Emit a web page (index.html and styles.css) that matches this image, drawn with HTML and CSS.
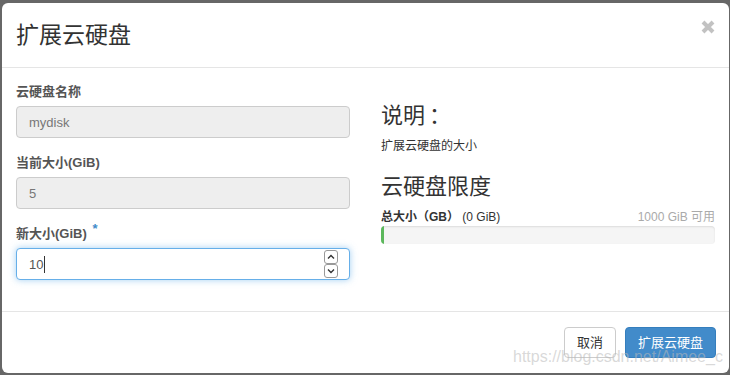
FILE: index.html
```html
<!DOCTYPE html>
<html lang="zh">
<head>
<meta charset="utf-8">
<link rel="stylesheet" href="styles.css">
</head>
<body>
<div class="modal">
  <div class="modal-header">
    <h4 class="modal-title">扩展云硬盘</h4>
    <span class="close" aria-label="关闭">
      <svg width="14" height="14" viewBox="0 0 14 14"><path d="M2 2L12 12M12 2L2 12" stroke="#c2c2c2" stroke-width="4" stroke-linecap="butt"/></svg>
    </span>
  </div>
  <div class="modal-body">
    <div class="col-left">
      <div class="form-group">
        <label class="label">云硬盘名称</label>
        <div class="field disabled">mydisk</div>
      </div>
      <div class="form-group">
        <label class="label">当前大小(GiB)</label>
        <div class="field disabled">5</div>
      </div>
      <div class="form-group">
        <label class="label">新大小(GiB) <span class="req">*</span></label>
        <div class="field focus">
          <span class="value">10</span><span class="caret"></span>
          <span class="spinner">
            <span class="spin">
              <svg width="8" height="6" viewBox="0 0 8 6"><path d="M1 4.5L4 1.5L7 4.5" fill="none" stroke="#333" stroke-width="1.4"/></svg>
            </span>
            <span class="spin">
              <svg width="8" height="6" viewBox="0 0 8 6"><path d="M1 1.5L4 4.5L7 1.5" fill="none" stroke="#333" stroke-width="1.4"/></svg>
            </span>
          </span>
        </div>
      </div>
    </div>
    <div class="col-right">
      <h3 class="heading first">说明<span class="colon">：</span></h3>
      <p class="desc">扩展云硬盘的大小</p>
      <h3 class="heading">云硬盘限度</h3>
      <div class="quota-row">
        <span><strong>总大小（GB）</strong> (0 GiB)</span>
        <span class="avail">1000 GiB 可用</span>
      </div>
      <div class="progress"><div class="progress-bar"></div></div>
    </div>
  </div>
  <div class="modal-footer">
    <button class="btn btn-default">取消</button>
    <button class="btn btn-primary">扩展云硬盘</button>
  </div>
  <div class="watermark">https://blog.csdn.net/Aimee_c</div>
</div>
</body>
</html>
```
FILE: styles.css
```css
html, body {
  margin: 0;
  padding: 0;
}
body {
  background: #676767;
  width: 730px;
  height: 375px;
  overflow: hidden;
  font-family: "Liberation Sans", "Noto Sans CJK SC", sans-serif;
  color: #333;
}
.modal {
  position: relative;
  margin: 3px 1px 0 2px;
  width: 727px;
  height: 370px;
  background: #fff;
  border-radius: 6px;
  box-sizing: border-box;
}
.modal-header {
  display: flex;
  justify-content: space-between;
  padding: 16px 14px 15px 14px;
  border-bottom: 1px solid #e5e5e5;
}
.modal-title {
  margin: 0;
  font-size: 23px;
  line-height: 33px;
  font-weight: normal;
  color: #333;
}
.close {
  display: block;
  width: 14px;
  height: 14px;
  margin-top: 1px;
}
.close svg { display: block; }
.modal-body {
  display: flex;
  gap: 31px;
  padding: 14px 14px 16px 14px;
}
.col-left, .col-right {
  width: 334px;
}
.form-group {
  margin-bottom: 15px;
}
.label {
  display: block;
  font-size: 13px;
  font-weight: bold;
  line-height: 20px;
  height: 20px;
  margin-bottom: 4px;
  color: #555;
}
.req {
  color: #428bca;
  font-size: 13px;
  position: relative;
  top: -5px;
  margin-left: 2px;
}
.field {
  display: flex;
  align-items: center;
  height: 32px;
  box-sizing: border-box;
  border: 1px solid #ccc;
  border-radius: 4px;
  padding: 0 11px 0 12px;
  font-size: 13px;
  color: #555;
  background: #fff;
}
.field.disabled {
  background: #eee;
  color: #777;
}
.field.focus {
  border-color: #66afe9;
  box-shadow: 0 0 7px rgba(102, 175, 233, 0.6);
}
.caret {
  display: inline-block;
  width: 1px;
  height: 17px;
  background: #333;
  margin-left: 1px;
}
.spinner {
  margin-left: auto;
  display: flex;
  flex-direction: column;
}
.spin {
  display: flex;
  align-items: center;
  justify-content: center;
  width: 12px;
  height: 12px;
  border: 1px solid #999;
  border-radius: 3px;
  background: #fff;
}
.spin svg { display: block; }
.heading {
  margin: 20px 0 10px;
  font-size: 22px;
  line-height: 24px;
  font-weight: normal;
  color: #333;
}
.heading.first {
  margin-top: 19px;
}
.colon {
  font-family: "Noto Sans CJK TC", sans-serif;
  margin-left: 4px;
}
.desc {
  margin: 10px 0 10px;
  font-size: 12px;
  line-height: 17px;
  color: #333;
}
.quota-row {
  display: flex;
  justify-content: space-between;
  font-size: 12px;
  line-height: 17px;
  color: #333;
}
.quota-row strong {
  font-weight: bold;
}
.avail {
  color: #aaa;
}
.progress {
  height: 18px;
  background: #f5f5f5;
  border-radius: 4px;
  box-shadow: inset 0 1px 2px rgba(0, 0, 0, 0.1);
  overflow: hidden;
}
.progress-bar {
  width: 3px;
  height: 100%;
  background: #5cb85c;
}
.modal-footer {
  display: flex;
  justify-content: flex-end;
  gap: 9px;
  border-top: 1px solid #e5e5e5;
  padding: 15px 13px 15px 15px;
}
.btn {
  font-family: "Liberation Sans", "Noto Sans CJK SC", sans-serif;
  font-size: 13px;
  line-height: 17px;
  padding: 6px 12px;
  border-radius: 4px;
  border: 1px solid #ccc;
  background: #fff;
  color: #333;
  margin: 0;
}
.btn-primary {
  background: #428bca;
  border-color: #357ebd;
  color: #fff;
}
.watermark {
  position: absolute;
  left: 511px;
  top: 344px;
  font-size: 16px;
  line-height: 20px;
  color: rgba(185, 185, 185, 0.55);
  font-family: "Liberation Sans", sans-serif;
  pointer-events: none;
}
```
